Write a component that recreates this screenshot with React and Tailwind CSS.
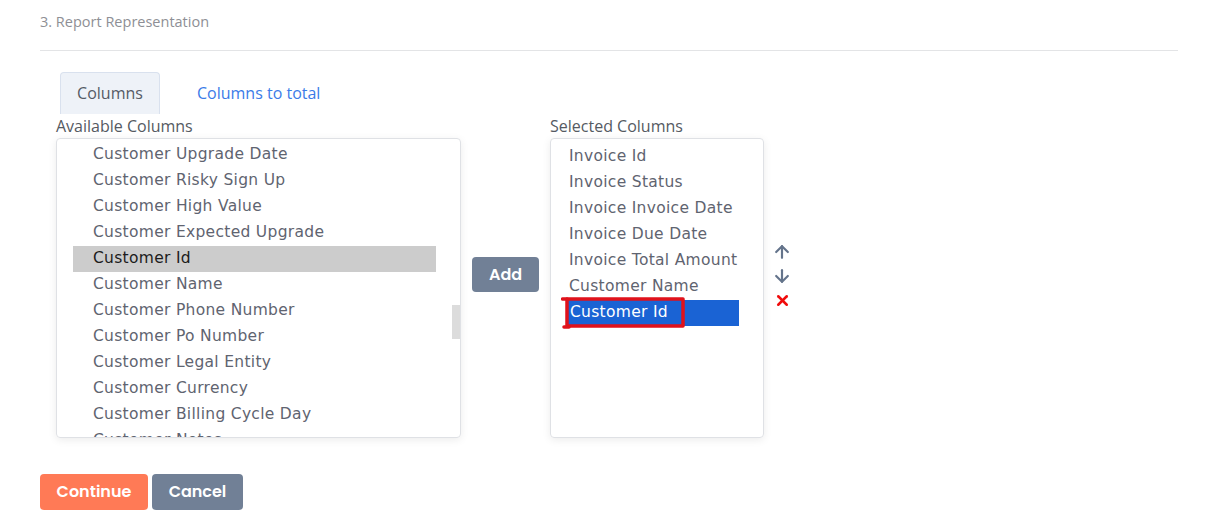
import React from 'react';
import { ArrowUp, ArrowDown, X } from 'lucide-react';

const available = [
  'Customer Upgrade Date',
  'Customer Risky Sign Up',
  'Customer High Value',
  'Customer Expected Upgrade',
  'Customer Id',
  'Customer Name',
  'Customer Phone Number',
  'Customer Po Number',
  'Customer Legal Entity',
  'Customer Currency',
  'Customer Billing Cycle Day',
  'Customer Notes',
];

const selected = [
  'Invoice Id',
  'Invoice Status',
  'Invoice Invoice Date',
  'Invoice Due Date',
  'Invoice Total Amount',
  'Customer Name',
  'Customer Id',
];

const listFont = "font-['DejaVu_Sans',sans-serif] text-[15.5px] tracking-[0.3px]";

const App = () => {
  return (
    <div className="w-[1218px] h-[530px] bg-white font-['Open_Sans',sans-serif] overflow-hidden">
      <div className="px-10 pt-[12px]">
        <div className="text-[14.5px] text-[#8e8f95] leading-[20px]">3. Report Representation</div>
        <div className="mt-[18px] h-px bg-[#e3e4e6]" />

        {/* tabs */}
        <div className="flex items-end mt-[21px] ml-5 h-[42px]">
          <div className="w-[100px] h-[42px] flex items-center justify-center pb-[1px] bg-[#eef2f8] border border-b-0 border-[#d9e1ee] rounded-t-[4px] text-[16px] text-[#555b66]">
            Columns
          </div>
          <div className="h-[42px] flex items-center ml-[37px] text-[16px] text-[#3b7be8]">Columns to total</div>
        </div>

        <div className="flex mt-[1px] ml-4">
          {/* available */}
          <div className="w-[405px]">
            <div className="text-[16px] text-[#555a62] leading-[22px]">Available Columns</div>
            <div className="relative mt-[1px] h-[300px] border border-[#dfe1e5] rounded-[4px] shadow-[0_2px_8px_rgba(0,0,0,0.08)] overflow-hidden pt-[3px]">
              {available.map((c) => (
                <div
                  key={c}
                  className={`ml-[16px] w-[363px] h-[26px] flex items-center pl-[20px] ${listFont} ${
                    c === 'Customer Id' ? 'bg-[#cccccc] text-[#1c1c1c]' : 'text-[#5f6470]'
                  }`}
                >
                  {c}
                </div>
              ))}
              <div className="absolute left-[395px] top-[166px] w-[8px] h-[34px] bg-[#dcdcdc]" />
            </div>
          </div>

          {/* add */}
          <div className="flex items-start pt-[142px] ml-[11px] w-[78px]">
            <button className="w-[67px] h-[35px] rounded-[4px] bg-[#718096] text-white font-['Poppins','Liberation_Sans',sans-serif] font-semibold text-[16px]">
              Add
            </button>
          </div>

          {/* selected */}
          <div className="w-[214px]">
            <div className="text-[16px] text-[#555a62] leading-[22px]">Selected Columns</div>
            <div className="relative mt-[1px] h-[300px] border border-[#dfe1e5] rounded-[4px] shadow-[0_2px_8px_rgba(0,0,0,0.08)] pt-[5px]">
              {selected.map((c) => (
                <div
                  key={c}
                  className={`h-[26px] flex items-center whitespace-nowrap ${listFont} ${
                    c === 'Customer Id'
                      ? 'ml-[16px] w-[172px] pl-[3px] bg-[#1a63d4] text-white'
                      : 'pl-[18px] text-[#5f6470]'
                  }`}
                >
                  {c}
                </div>
              ))}
              <svg className="absolute left-[10px] top-[158px]" width="125" height="32" viewBox="0 0 125 32" fill="none">
                <path d="M6 2 H122 V29 H6 Z" stroke="#e0121b" strokeWidth="3.5" strokeLinejoin="round" />
                <path d="M1.5 2 H6 M3 30 H8" stroke="#e0121b" strokeWidth="3.5" strokeLinecap="round" />
              </svg>
            </div>
          </div>

          {/* move controls */}
          <div className="flex flex-col items-center pt-[127px] ml-[8px] gap-[4px]">
            <div className="h-[20px] w-[20px] flex items-center justify-center">
              <ArrowUp size={20} strokeWidth={2.6} className="text-[#64748b]" />
            </div>
            <div className="h-[20px] w-[20px] flex items-center justify-center">
              <ArrowDown size={20} strokeWidth={2.6} className="text-[#64748b]" />
            </div>
            <div className="h-[20px] w-[20px] flex items-center justify-center">
              <X size={17} strokeWidth={3.6} className="text-[#f00c0c]" />
            </div>
          </div>
        </div>

        <div className="flex gap-1 mt-[36px]">
          <button className="w-[108px] h-[36px] rounded-[4px] bg-[#ff7a56] text-white font-['Poppins','Liberation_Sans',sans-serif] font-semibold text-[16px]">
            Continue
          </button>
          <button className="w-[91px] h-[36px] rounded-[4px] bg-[#718096] text-white font-['Poppins','Liberation_Sans',sans-serif] font-semibold text-[16px]">
            Cancel
          </button>
        </div>
      </div>
    </div>
  );
};

export default App;
